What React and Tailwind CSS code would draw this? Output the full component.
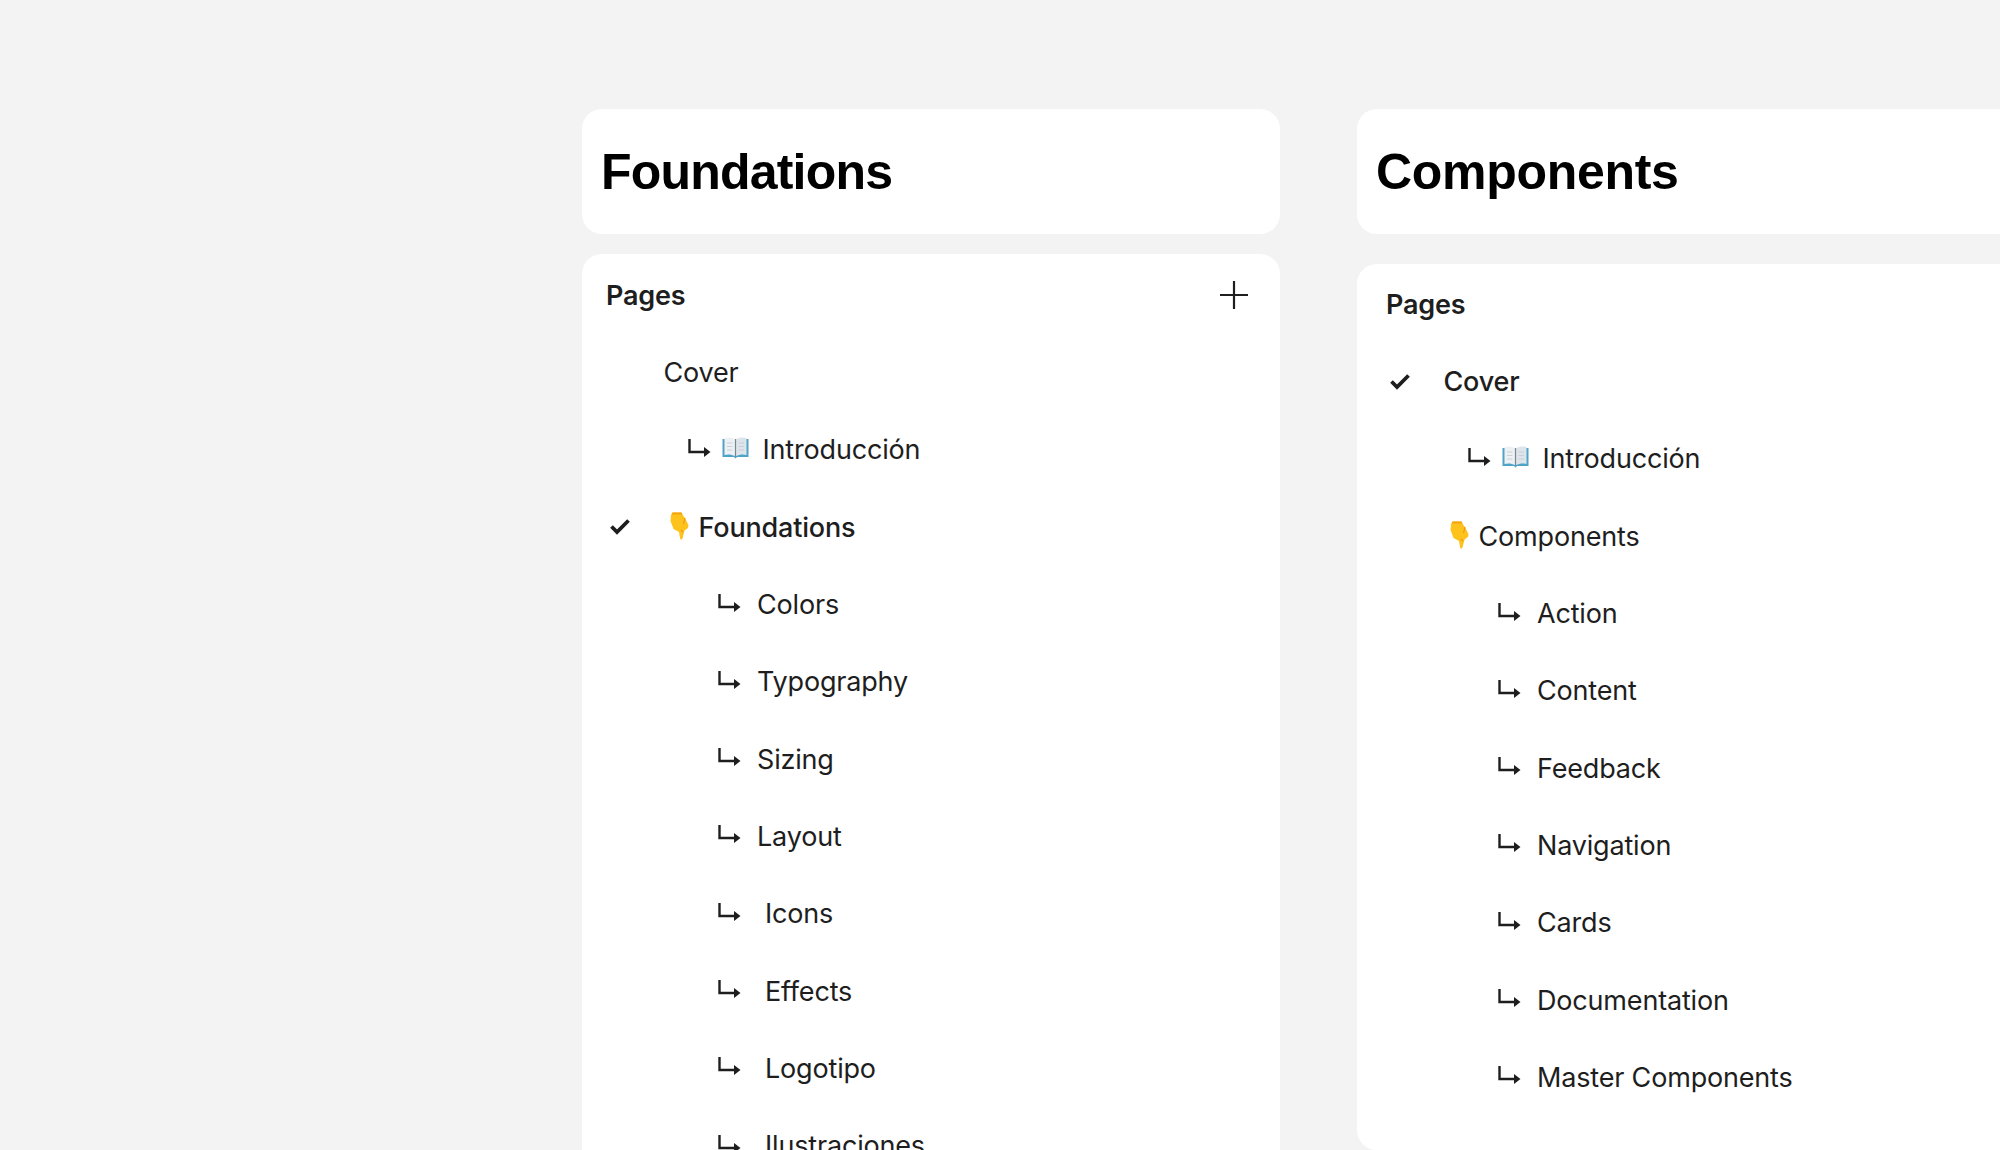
const foundations = [
  { type: 'top', label: 'Cover' },
  { type: 'intro', label: 'Introducción' },
  { type: 'section', label: 'Foundations', active: true },
  { type: 'sub', label: 'Colors' },
  { type: 'sub', label: 'Typography' },
  { type: 'sub', label: 'Sizing' },
  { type: 'sub', label: 'Layout' },
  { type: 'subwide', label: 'Icons' },
  { type: 'subwide', label: 'Effects' },
  { type: 'subwide', label: 'Logotipo' },
  { type: 'subwide', label: 'Ilustraciones' },
]

const components = [
  { type: 'top', label: 'Cover', active: true },
  { type: 'intro', label: 'Introducción' },
  { type: 'section', label: 'Components' },
  { type: 'sub', label: 'Action' },
  { type: 'sub', label: 'Content' },
  { type: 'sub', label: 'Feedback' },
  { type: 'sub', label: 'Navigation' },
  { type: 'sub', label: 'Cards' },
  { type: 'sub', label: 'Documentation' },
  { type: 'sub', label: 'Master Components' },
]

function Check() {
  return (
    <svg width="22" height="18" viewBox="0 0 22 18" className="absolute left-[3px] -mt-[2px]">
      <path d="M2.5 9.5 L8 15 L19.5 3.5" fill="none" stroke="#1e1e1e" strokeWidth="3.8" />
    </svg>
  )
}

function Arrow() {
  return (
    <svg width="23" height="18" viewBox="0 0 23 18" className="-mt-[4px] block shrink-0">
      <path d="M1.5 0 V13 H17" fill="none" stroke="#1e1e1e" strokeWidth="2.4" />
      <path d="M16 8 L22.5 13 L16 18 Z" fill="#1e1e1e" />
    </svg>
  )
}

function Book() {
  return (
    <svg width="27" height="22" viewBox="0 0 27 22" className="-mt-[4px] block shrink-0">
      <path d="M0.5 2 H26.5 V20 H15 L13.5 21.5 L12 20 H0.5 Z" fill="#4fa3c7" />
      <path d="M2.5 1 C6 0 10 0.5 13 2 V19 C10 17.5 6 17 2.5 18 Z" fill="#eef1f4" />
      <path d="M24.5 1 C21 0 17 0.5 14 2 V19 C17 17.5 21 17 24.5 18 Z" fill="#dde4ea" />
      <path d="M13.5 2 V19.5" stroke="#7b8790" strokeWidth="1.2" />
      <path d="M5 6 H10.5 M5 9.5 H10.5 M5 13 H10.5 M16.5 6 H22 M16.5 9.5 H22 M16.5 13 H22" stroke="#c8d0d7" strokeWidth="1" />
    </svg>
  )
}

function Hand() {
  return (
    <svg width="19" height="28" viewBox="0 0 19 28" className="-mt-[2px] block shrink-0">
      <path d="M2.5 0.5 H11.5 L13 3.5 L15 6 L18.5 13 L18 16 L14.5 18.5 L12.5 26.5 C12 28 10.4 28 10.1 26.5 L9 20 L3.5 17 L0.5 9 L1 3 Z" fill="#fdc21c" />
      <path d="M2.5 0.5 H11.5 L12.5 2.5 H1.7 Z" fill="#f5a30f" />
      <path d="M15 6 L13.5 12 M11 18 L13 20" stroke="#ea9a12" strokeWidth="1.1" fill="none" />
    </svg>
  )
}

function Row({ row }) {
  return (
    <div className="relative flex h-[77.3px] items-center text-[27px] leading-none tracking-[-0.18px] text-[#1e1e1e]">
      {row.active && <Check />}
      {row.type === 'top' && <span className={`ml-[57.5px] ${row.active ? 'font-medium' : ''}`}>{row.label}</span>}
      {row.type === 'intro' && (
        <>
          <span className="ml-[82px]"><Arrow /></span>
          <span className="ml-[11px]"><Book /></span>
          <span className="ml-[13.5px]">{row.label}</span>
        </>
      )}
      {row.type === 'section' && (
        <>
          <span className="ml-[64px]"><Hand /></span>
          <span className={`ml-[9.5px] ${row.active ? 'font-medium' : ''}`}>{row.label}</span>
        </>
      )}
      {row.type === 'sub' && (
        <>
          <span className="ml-[112px]"><Arrow /></span>
          <span className="ml-[16px]">{row.label}</span>
        </>
      )}
      {row.type === 'subwide' && (
        <>
          <span className="ml-[112px]"><Arrow /></span>
          <span className="ml-[24px]">{row.label}</span>
        </>
      )}
    </div>
  )
}

function Panel({ title, rows, plus, headingClass, cardClass, gapClass, headClass, rowsClass }) {
  return (
    <div className={`flex h-full w-[698px] shrink-0 flex-col ${gapClass}`}>
      <div className="flex h-[125px] shrink-0 items-center rounded-[20px] bg-white pl-[19px]">
        <h1 className={`font-['Liberation_Sans',Arial,sans-serif] text-[50px] font-bold leading-none text-black ${headingClass}`}>
          {title}
        </h1>
      </div>
      <div className={`flex-1 overflow-hidden rounded-[20px] bg-white ${cardClass}`}>
        <div className={`flex items-center justify-between pr-[32px] ${headClass}`}>
          <span className="text-[27px] font-semibold leading-none tracking-[-0.18px] text-[#1e1e1e]">Pages</span>
          {plus && (
            <svg width="28" height="28" viewBox="0 0 28 28">
              <path d="M14 0 V28 M0 14 H28" stroke="#1e1e1e" strokeWidth="2.2" />
            </svg>
          )}
        </div>
        <div className={rowsClass}>
          {rows.map((r) => (
            <Row key={r.label} row={r} />
          ))}
        </div>
      </div>
    </div>
  )
}

export default function App() {
  return (
    <div className="h-[1150px] w-[2000px] overflow-hidden bg-[#f3f3f3] font-['Inter',sans-serif]">
      <div className="flex h-[1150px] gap-[77px] pl-[582px] pt-[109px]">
        <Panel
          title="Foundations"
          rows={foundations}
          plus
          headingClass="tracking-[-0.8px]"
          cardClass="mb-[-60px] pl-[24px]"
          gapClass="gap-[20px]"
          headClass="h-[82px]"
          rowsClass="-mt-[2px]"
        />
        <Panel
          title="Components"
          rows={components}
          headingClass="tracking-[-0.3px]"
          cardClass="pl-[29px]"
          gapClass="gap-[30px]"
          headClass="h-[81px]"
          rowsClass="-mt-[2px]"
        />
      </div>
    </div>
  )
}
